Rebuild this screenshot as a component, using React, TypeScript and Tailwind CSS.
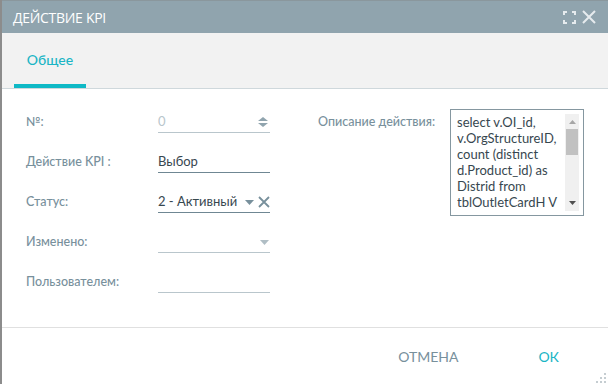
import { ReactNode } from 'react';

const font = "font-['Lato',sans-serif]";

function Row({ label, children }: { label: string; children: ReactNode }) {
  return (
    <div className="h-[40px] flex items-end">
      <div className="w-[132px] h-[21px] flex items-center text-[12.5px] font-medium text-[#78909c]">{label}</div>
      {children}
    </div>
  );
}

function Field({ value, dim, active, right }: { value?: string; dim?: boolean; active?: boolean; right?: ReactNode }) {
  return (
    <div
      className={`w-[112px] h-[21px] flex items-center justify-between border-b ${
        active ? 'border-[#6f8793]' : 'border-[#b9c6cc]'
      }`}
    >
      <span className={`text-[13px] ${dim ? 'text-[#b9c6cc]' : 'text-[#37474f]'}`}>{value}</span>
      {right}
    </div>
  );
}

const Caret = ({ color }: { color: string }) => (
  <svg width="9" height="5" viewBox="0 0 9 5">
    <path d="M0 0h9L4.5 5z" fill={color} />
  </svg>
);

export default function App() {
  return (
    <div className={`w-[608px] h-[384px] bg-white border-l-2 border-[#8c8c8c] flex flex-col relative overflow-hidden ${font}`}>
      {/* title bar */}
      <div className="h-[33px] bg-[#90a4ae] border-t border-[#8a979d] flex items-center justify-between pl-[11px] pr-[12px]">
        <span className="text-white text-[14px] font-['Open_Sans',sans-serif] tracking-[-0.3px]">ДЕЙСТВИЕ KPI</span>
        <div className="flex items-center gap-[6px]">
          <svg width="13" height="13" viewBox="0 0 13 13" fill="none" stroke="#e6ebee" strokeWidth="2">
            <path d="M1 4V1h3M9 1h3v3M12 9v3H9M4 12H1V9" />
          </svg>
          <svg width="14" height="14" viewBox="0 0 14 14" fill="none" stroke="#e6ebee" strokeWidth="2">
            <path d="M1 1l12 12M13 1L1 13" />
          </svg>
        </div>
      </div>

      {/* tabs */}
      <div className="h-[56px] bg-[#f2f2f2] border-b border-[#cfd8dc] flex items-end pl-[12px]">
        <div className="w-[72px] h-full flex flex-col">
          <div className="flex-1 flex items-center justify-center pt-[2px] text-[14px] font-medium text-[#1ab5c5]">Общее</div>
          <div className="h-[4px] bg-[#0fb9c6]" />
        </div>
      </div>

      {/* body */}
      <div className="flex-1 flex pl-[24px] pt-[4px]">
        <div className="w-[292px]">
          <Row label="№:">
            <Field
              value="0"
              dim
              right={
                <svg width="10" height="10" viewBox="0 0 10 10" className="mr-[2px]">
                  <path d="M5 0L10 4H0z M0 6h10L5 10z" fill="#90a4ae" />
                </svg>
              }
            />
          </Row>
          <Row label="Действие KPI :">
            <Field value="Выбор" active />
          </Row>
          <Row label="Статус:">
            <Field
              value="2 - Активный"
              active
              right={
                <div className="flex items-center gap-[4px]">
                  <Caret color="#78909c" />
                  <svg width="12" height="12" viewBox="0 0 12 12" fill="none" stroke="#78909c" strokeWidth="1.8">
                    <path d="M1 1l10 10M11 1L1 11" />
                  </svg>
                </div>
              }
            />
          </Row>
          <Row label="Изменено:">
            <Field right={<span className="mr-[1px] flex"><Caret color="#b0bec5" /></span>} />
          </Row>
          <Row label="Пользователем:">
            <Field />
          </Row>
        </div>

        <div className="flex items-start pt-[16px]">
          <div className="w-[132px] h-[21px] mt-[3px] flex items-center text-[12.5px] font-medium text-[#78909c]">Описание действия:</div>
          <div className="w-[134px] h-[107px] border border-[#8597a0] flex py-[4px] pl-[6px] pr-[4px] gap-[3px]">
            <div className="flex-1 text-[13px] leading-[16px] text-[#37474f] overflow-hidden">
              select v.OI_id, v.OrgStructureID, count (distinct d.Product_id) as Distrid from tblOutletCardH V
            </div>
            <div className="w-[14px] bg-[#f0f0f0] flex flex-col items-center py-[6px]">
              <svg width="7" height="4" viewBox="0 0 7 4">
                <path d="M3.5 0L7 4H0z" fill="#a6a6a6" />
              </svg>
              <div className="w-[12px] h-[26px] bg-[#c1c1c1] mt-[5px] mb-auto" />
              <svg width="7" height="4" viewBox="0 0 7 4">
                <path d="M0 0h7L3.5 4z" fill="#505050" />
              </svg>
            </div>
          </div>
        </div>
      </div>

      {/* footer */}
      <div className="h-[57px] border-t border-[#e0e0e0] flex items-center justify-end pr-[49px] gap-[80px] text-[14px]">
        <span className="text-[#78909c]">ОТМЕНА</span>
        <span className="text-[#1ab5c5]">ОК</span>
      </div>

      {/* resize grip */}
      <svg width="10" height="10" viewBox="0 0 10 10" className="absolute right-[2px] bottom-[1px]">
        <g fill="#c5cdd1">
          <rect x="8" y="0" width="2" height="2" />
          <rect x="4" y="4" width="2" height="2" />
          <rect x="8" y="4" width="2" height="2" />
          <rect x="0" y="8" width="2" height="2" />
          <rect x="4" y="8" width="2" height="2" />
          <rect x="8" y="8" width="2" height="2" />
        </g>
      </svg>
    </div>
  );
}
